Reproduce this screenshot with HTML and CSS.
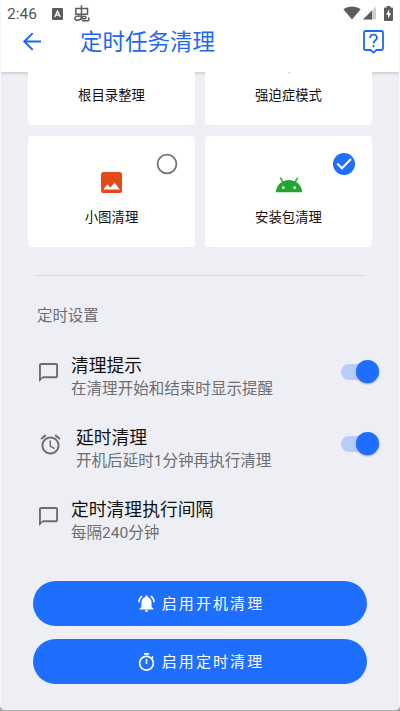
FILE: index.html
```html
<!DOCTYPE html>
<html lang="zh-CN">
<head>
<meta charset="utf-8">
<title>定时任务清理</title>
<link rel="stylesheet" href="styles.css">
</head>
<body>
<div class="screen">
  <header class="topbar">
    <div class="status">
      <span class="clock">2:46</span>
      <svg class="badge-a" width="11" height="12" viewBox="0 0 11 12"><rect width="11" height="12" rx="1" fill="#5c5c5c"/><path d="M2.800 9 5.500 3l2.700 6M3.800 7.200h3.400" fill="none" stroke="#fff" stroke-width="1.300"/></svg>
      <svg class="bug" width="16" height="17" viewBox="0 0 16 17" fill="none" stroke="#5c5c5c" stroke-width="1.500"><path d="M7.500.3V15M1.800 3.500h11.700v5.800H1.800zM7.300 11.500C3 10.500.8 11.500.8 13.500c0 2.500 4.700 2.500 6.700-.5 1.500-2.200 4.500-2.200 4.500-.5s-2.500 1.200-3.500 1.200M8 15.800h6c1.500 0 1.200-2 .3-3.500"/></svg>
      <div class="signals">
        <svg width="18" height="14" viewBox="0 0 18 14"><path d="M9 13.500.4 3.300C5.500-.4 12.500-.4 17.600 3.300z" fill="#5c5c5c"/></svg>
        <svg class="cell" width="13" height="14" viewBox="0 0 13 14"><path d="M0 13.500 13 .500v13z" fill="#cfcfcf"/><path d="M0 13.500 9 4.500v9z" fill="#5c5c5c"/></svg>
        <svg class="battery" width="9" height="15" viewBox="0 0 9 15"><path d="M2.700 0h3.600v1.600H8q1 0 1 1V14q0 1-1 1H1q-1 0-1-1V2.600q0-1 1-1h1.700z" fill="#5c5c5c"/><path d="M5.200 3.500 2 8.800h2v3.700l3.200-5.200H5.200z" fill="#fff"/></svg>
      </div>
    </div>
    <div class="appbar">
      <svg class="back" width="18" height="19" viewBox="0 0 18 19" fill="none" stroke="#1d68f0" stroke-width="2"><path d="M18 9.500H2M9.700 1.100 1.300 9.500l8.400 8.400"/></svg>
      <h1>定时任务清理</h1>
      <svg class="help" width="21" height="24" viewBox="0 0 21 24" fill="none" stroke="#1d68f0" stroke-width="1.800"><path d="M2.500 1h16q1.500 0 1.500 1.500v16q0 1.500-1.500 1.500h-5l-3 2.600-3-2.600h-5Q1 20 1 18.500v-16Q1 1 2.500 1z"/><path d="M7.100 7.900c0-4.500 6.900-4.500 6.900 0 0 2.300-3.500 2.600-3.500 5.600M10.500 15v2.200"/></svg>
    </div>
  </header>
  <main>
    <div class="cards">
      <div class="card cut"><span>根目录整理</span></div>
      <div class="card cut tip"><span>强迫症模式</span></div>
      <div class="card">
        <svg class="pick" width="22" height="22" viewBox="0 0 22 22"><circle cx="11" cy="11" r="9.400" fill="none" stroke="#747474" stroke-width="1.800"/></svg>
        <svg class="glyph" width="21" height="21" viewBox="3 3 18 18"><path fill="#e64a19" d="M21 19V5c0-1.100-.9-2-2-2H5c-1.100 0-2 .9-2 2v14c0 1.100.9 2 2 2h14c1.100 0 2-.9 2-2z"/><path fill="#fff" d="M8.500 13.500l2.500 3.010L14.500 12l4.500 6H5z"/></svg>
        <span>小图清理</span>
      </div>
      <div class="card">
        <svg class="pick" width="22" height="22" viewBox="0 0 22 22"><circle cx="11" cy="11" r="11" fill="#1e6eff"/><path d="m4.300 10.500 4.700 4.800 9-9.300" fill="none" stroke="#fff" stroke-width="2.100"/></svg>
        <svg class="glyph droid" width="26" height="16" viewBox="0 0 26 16"><path d="M0 15.300a13 12.300 0 0 1 26 0z" fill="#22a62f"/><path d="m4.300.6 3 5M21.700.6l-3 5" stroke="#22a62f" stroke-width="1.500"/><circle cx="7.300" cy="10.700" r="1.400" fill="#fff"/><circle cx="18.700" cy="10.700" r="1.400" fill="#fff"/></svg>
        <span>安装包清理</span>
      </div>
    </div>
    <h2>定时设置</h2>
    <section class="rows">
      <div class="row">
        <svg class="chat" width="19" height="19" viewBox="2 2 20 20"><path fill="#6d6e71" d="M20 2H4c-1.100 0-2 .9-2 2v18l4-4h14c1.100 0 2-.9 2-2V4c0-1.100-.9-2-2-2zm0 14H6l-2 2V4h16v12z"/></svg>
        <div class="copy"><b>清理提示</b><p>在清理开始和结束时显示提醒</p></div>
        <div class="switch"></div>
      </div>
      <div class="row alarm">
        <svg class="clock-icon" width="21" height="21" viewBox="1.500 1.500 21 21"><path fill="#6d6e71" d="M22 5.720l-4.600-3.860-1.290 1.530 4.600 3.860L22 5.720zM7.880 3.390L6.600 1.860 2 5.710l1.290 1.530 4.590-3.850zM12.500 8H11v6l4.750 2.850.75-1.230-4-2.370V8zM12 4c-4.970 0-9 4.030-9 9s4.020 9 9 9c4.970 0 9-4.030 9-9s-4.030-9-9-9zm0 16c-3.870 0-7-3.130-7-7s3.130-7 7-7 7 3.130 7 7-3.130 7-7 7z"/></svg>
        <div class="copy"><b>延时清理</b><p>开机后延时1分钟再执行清理</p></div>
        <div class="switch"></div>
      </div>
      <div class="row">
        <svg class="chat" width="19" height="19" viewBox="2 2 20 20"><path fill="#6d6e71" d="M20 2H4c-1.100 0-2 .9-2 2v18l4-4h14c1.100 0 2-.9 2-2V4c0-1.100-.9-2-2-2zm0 14H6l-2 2V4h16v12z"/></svg>
        <div class="copy"><b>定时清理执行间隔</b><p>每隔240分钟</p></div>
      </div>
    </section>
    <div class="actions">
      <button><svg width="17" height="17" viewBox="2 2 20 20"><path fill="#fff" d="M7.580 4.080L6.150 2.650C3.750 4.480 2.170 7.300 2.030 10.500h2c.15-2.650 1.510-4.970 3.550-6.420zm12.390 6.420h2c-.15-3.200-1.730-6.020-4.120-7.850l-1.420 1.430c2.020 1.450 3.390 3.770 3.540 6.420zM18 11c0-3.070-1.640-5.640-4.500-6.320V4c0-.83-.67-1.500-1.500-1.500s-1.500.67-1.500 1.500v.68C7.630 5.360 6 7.920 6 11v5l-2 2v1h16v-1l-2-2v-5zm-6 11c1.100 0 2-.9 2-2h-4c0 1.100.89 2 2 2z"/></svg><span>启用开机清理</span></button>
      <button><svg width="17" height="18" viewBox="2 1 20 21"><path fill="#fff" d="M15 1H9v2h6V1zm-4 13h2V8h-2v6zm8.030-6.610l1.420-1.420c-.43-.51-.9-.99-1.410-1.410l-1.420 1.420C16.070 4.740 14.120 4 12 4c-4.970 0-9 4.030-9 9s4.020 9 9 9 9-4.030 9-9c0-2.120-.74-4.070-1.970-5.610zM12 20c-3.870 0-7-3.130-7-7s3.130-7 7-7 7 3.130 7 7-3.130 7-7 7z"/></svg><span>启用定时清理</span></button>
    </div>
  </main>
</div>
</body>
</html>
```
FILE: styles.css
```css
* { box-sizing: border-box; margin: 0; padding: 0; }
html { background: #aaa9ad; }
body { width: 400px; height: 711px; overflow: hidden; font-family: Roboto, "Noto Sans CJK SC", sans-serif; color: #111; }
svg { display: block; flex: none; overflow: visible; }
.screen { width: 400px; height: 710px; background: #eeeff4; border-radius: 0 0 5px 5px; border: solid #f6f6f9; border-width: 0 1px 1px; overflow: hidden; }
.topbar { position: relative; height: 72px; margin: 0 -1px; background: #fff; box-shadow: 0 1px 3px rgba(0,0,0,.2); }
.status { display: flex; height: 26px; padding: 5px 7px 0; align-items: flex-start; }
.clock { width: 45px; font-size: 15.500px; line-height: 18px; color: #555; }
.badge-a { margin-top: 3px; }
.bug { margin-left: 11px; }
.signals { display: flex; margin-left: auto; padding-top: 1px; }
.cell { margin-left: 2px; }
.battery { margin-left: 8px; }
.appbar { display: flex; align-items: center; height: 30px; padding: 0 16px 0 23px; }
h1 { margin-left: 39px; padding-top: 2px; flex: 1; font-size: 22.500px; font-weight: 400; line-height: 30px; color: #1d68f0; }
.help { margin-top: 2px; }
.cards { display: grid; grid-template-columns: 167px 167px; grid-template-rows: 53px 111px; gap: 11px 10px; margin-left: 27px; }
.card { display: flex; flex-direction: column; align-items: center; position: relative; background: #fff; border-radius: 4px; font-size: 13.400px; line-height: 20px; }
.cut { padding-top: 14px; border-radius: 0 0 4px 4px; }
.tip::before { content: ""; position: absolute; top: 0; left: 83px; width: 2px; height: 2px; background: #cfeadb; }
.pick { position: absolute; top: 17px; right: 17px; }
.glyph { margin-top: 36px; margin-bottom: 15px; }
.droid { margin-top: 41px; margin-bottom: 15px; }
h2 { margin: 28px 35px 0; padding: 28px 0 0 1px; border-top: 1px solid #d8d9de; font-size: 15.400px; line-height: 24px; font-weight: 400; color: #6d6e71; }
.rows { margin: 25px 20px 0 37px; }
.row { display: flex; height: 72px; }
.chat { margin: 10px 13px 0 1px; }
.clock-icon { margin: 9px 15px 0 2px; }
.copy { flex: 1; padding-top: 1px; }
b { display: block; font-size: 17.800px; line-height: 23px; font-weight: 400; color: #111; }
p { padding-top: 1px; font-size: 15.550px; line-height: 22px; color: #6d6e71; }
.switch { width: 38px; height: 16px; padding-left: 15px; margin-top: 11px; border-radius: 8px; background: #b7cdf8; }
.switch::after { content: ""; display: block; width: 23px; height: 23px; margin-top: -4px; border-radius: 50%; background: #1e6eff; box-shadow: 0 1px 2px rgba(0,0,0,.35); }
.actions { display: grid; gap: 13px; margin: 12px 32px 0; }
button { display: flex; align-items: center; justify-content: center; height: 45px; border: 0; border-radius: 23px; background: #1e6eff; color: #fff; font: 15px/22px Roboto, "Noto Sans CJK SC", sans-serif; letter-spacing: 2.100px; gap: 7px; padding-left: 2px; }
button span { padding-top: 1px; }
```
